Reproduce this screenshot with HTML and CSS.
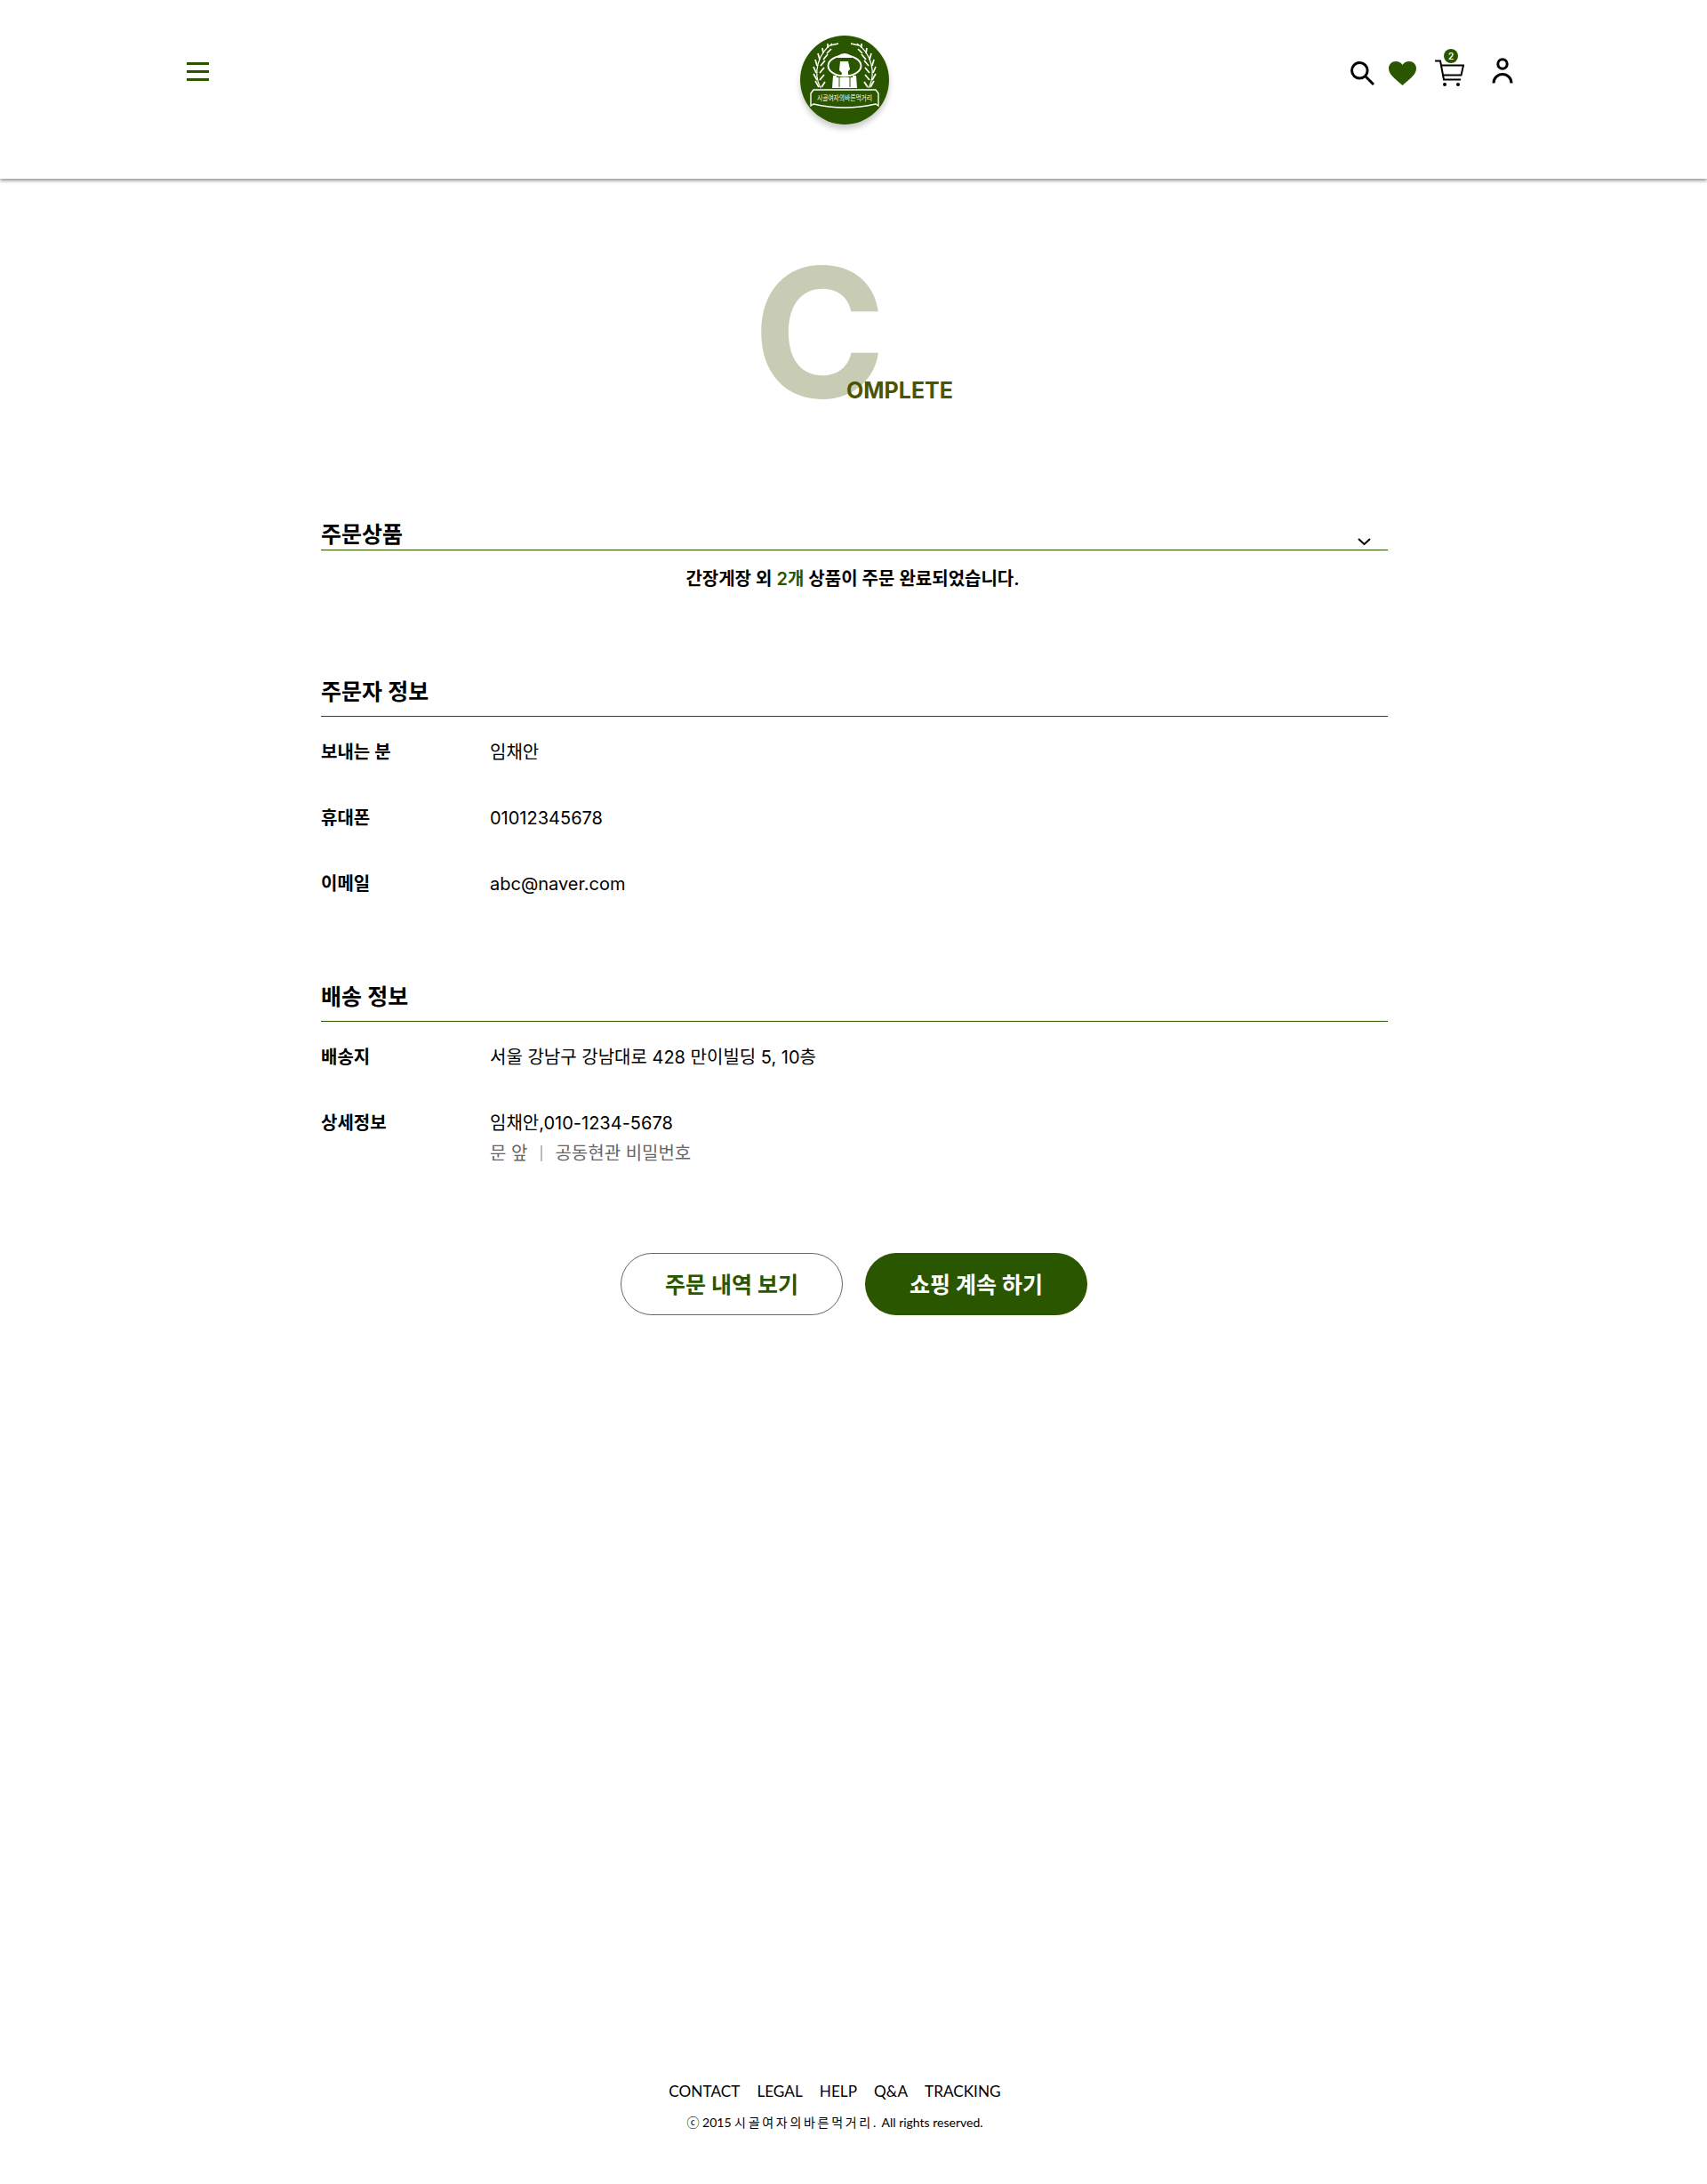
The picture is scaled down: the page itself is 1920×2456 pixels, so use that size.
FILE: index.html
```html
<!DOCTYPE html>
<html lang="ko">

<head>
    <meta charset="utf-8">
    <title>주문 완료</title>
    <meta name="viewport" content="width=device-width, initial-scale=1">
    <link rel="stylesheet" href="styles.css">
</head>

<body>
    <header class="top">
        <button class="menu" aria-label="menu"><span></span><span></span><span></span></button>
        <a class="logo" href="#">
            <svg viewBox="0 0 100 100" width="100" height="100">
                <circle cx="50" cy="50" r="50" fill="#2b5600" />
                <g fill="none" stroke="#fff">
                    <path stroke-width="1.200" d="M23 59C14 42 20 20 36 9M77 59C86 42 80 20 64 9" />
                    <path stroke-width="1.700" d="M21 58l-4-7M19 50l-4-7M18 42l-3-7M19 34l-2-7M22 27l-2-7M26 20l-1-6M31 14l0-5M24 58l4-6M22 50l5-6M22 42l5-6M23 34l5-6M26 27l5-6M30 20l5-5M34 11l9-2" />
                    <path stroke-width="1.700" d="M79 58l4-7M81 50l4-7M82 42l3-7M81 34l2-7M78 27l2-7M74 20l1-6M69 14l0-5M76 58l-4-6M78 50l-5-6M78 42l-5-6M77 34l-5-6M74 27l-5-6M70 20l-5-5M66 11l-9-2" />
                    <ellipse cx="50" cy="34" rx="18.500" ry="11.500" stroke-width="1.900" />
                </g>
                <path d="M42 23q8-6 16 0v2H42z" fill="#fff" />
                <path d="M45 29h9l2 9-2 2v6H46l1-4-3-3z" fill="#fff" />
                <path d="M37 45h4v2h18v-2h4l1 14H36z" fill="#fff" />
                <path d="M44 47v11M56 47v11" stroke="#2b5600" stroke-width="1" />
                <path d="M15 61H85l3 4v14l-3-2q-35 8-70 0l-3 2V65z" fill="#2b5600" stroke="#fff" stroke-width="1.400" />
                <text x="50" y="72.500" class="logo-text" textLength="62" lengthAdjust="spacingAndGlyphs">시골여자의바른먹거리</text>
            </svg>
        </a>
        <nav class="icons">
            <a href="#" class="ico-search">
                <svg viewBox="0 0 27 27" width="27" height="27" fill="none" stroke="#000" stroke-width="3">
                    <circle cx="10.300" cy="10.300" r="8.800" />
                    <path d="M16.500 16.500L26 26" />
                </svg>
            </a>
            <a href="#" class="ico-heart">
                <svg viewBox="0 0 31 27" width="31" height="27" fill="#2b5600">
                    <path d="M15.500 27C11 22.500 0 16 0 8C0 3.500 3.500 0 8 0C11 0 14 1.500 15.500 4C17 1.500 20 0 23 0C27.500 0 31 3.500 31 8C31 16 20 22.500 15.500 27Z" />
                </svg>
            </a>
            <a href="#" class="ico-cart">
                <svg viewBox="0 0 33 31" width="33" height="31" fill="none" stroke="#000" stroke-width="2">
                    <path d="M0 1.500h6l4 21h19" />
                    <path d="M6 6.500h26l-2.500 11H8" />
                    <circle cx="11" cy="28" r="2" fill="#000" stroke="none" />
                    <circle cx="26" cy="28" r="2" fill="#000" stroke="none" />
                </svg>
                <span class="badge">2</span>
            </a>
            <a href="#" class="ico-user">
                <svg viewBox="0 0 24 30" width="24" height="30" fill="none" stroke="#000" stroke-width="3">
                    <circle cx="12" cy="7" r="5.200" />
                    <path d="M2 28.500a10 10 0 0 1 20 0" />
                </svg>
            </a>
        </nav>
    </header>

    <main class="wrap">
        <div class="hero">
            <div class="hero-inner">
                <span class="big-c">C</span>
                <span class="omplete">OMPLETE</span>
            </div>
        </div>

        <section class="block first">
            <div class="block-title">
                <h2>주문상품</h2>
                <svg class="chev" viewBox="0 0 15 8" width="15" height="8" fill="none" stroke="#000" stroke-width="2">
                    <path d="M1 1l6.500 6L14 1" />
                </svg>
            </div>
            <p class="summary">간장게장 외 <em>2개</em> 상품이 주문 완료되었습니다.</p>
        </section>

        <section class="block">
            <div class="block-title">
                <h2>주문자 정보</h2>
            </div>
            <dl class="rows">
                <div class="row"><dt>보내는 분</dt><dd>임채안</dd></div>
                <div class="row"><dt>휴대폰</dt><dd>01012345678</dd></div>
                <div class="row"><dt>이메일</dt><dd>abc@naver.com</dd></div>
            </dl>
        </section>

        <section class="block last">
            <div class="block-title">
                <h2>배송 정보</h2>
            </div>
            <dl class="rows">
                <div class="row"><dt>배송지</dt><dd>서울 강남구 강남대로 428 만이빌딩 5, 10층</dd></div>
                <div class="row">
                    <dt>상세정보</dt>
                    <dd>
                        임채안,010-1234-5678
                        <div class="sub"><span>문 앞</span><i></i><span>공동현관 비밀번호</span></div>
                    </dd>
                </div>
            </dl>
        </section>

        <div class="buttons">
            <a href="#" class="btn line">주문 내역 보기</a>
            <a href="#" class="btn solid">쇼핑 계속 하기</a>
        </div>
    </main>

    <footer class="foot">
        <ul>
            <li>CONTACT</li>
            <li>LEGAL</li>
            <li>HELP</li>
            <li>Q&amp;A</li>
            <li>TRACKING</li>
        </ul>
        <p>ⓒ 2015 <span>시골여자의바른먹거리.</span> All rights reserved.</p>
    </footer>
</body>

</html>
```

FILE: styles.css
```css
* {
    box-sizing: border-box;
}

html,
body {
    margin: 0;
    padding: 0;
    height: 2456px;
    overflow: hidden;
}

body {
    display: flex;
    flex-direction: column;
    background: #fff;
    color: #000;
    font-family: Inter, "Noto Sans CJK KR", sans-serif;
}

a {
    color: inherit;
    text-decoration: none;
}

/* header */
.top {
    display: flex;
    align-items: flex-start;
    height: 201px;
    padding: 40px 0 0 210px;
    box-shadow: 0 2px 4px rgba(0, 0, 0, 0.45);
}

.menu {
    display: flex;
    flex-direction: column;
    gap: 6px;
    width: 25px;
    margin-top: 30px;
    padding: 0;
    border: 0;
    background: none;
}

.menu span {
    display: block;
    height: 3px;
    background: #2b5600;
}

.logo {
    display: block;
    width: 100px;
    height: 100px;
    margin-left: 665px;
    border-radius: 50%;
    box-shadow: 0 5px 6px rgba(0, 0, 0, 0.2);
}

.logo svg {
    display: block;
}

.logo-text {
    fill: #fff;
    font-size: 8.500px;
    text-anchor: middle;
    font-family: "Noto Sans CJK KR", sans-serif;
}

.icons {
    display: flex;
    align-items: flex-start;
    margin-left: 519px;
}

.icons a {
    position: relative;
    display: block;
}

.icons svg {
    display: block;
}

.ico-search {
    margin-top: 29px;
}

.ico-heart {
    margin-top: 29px;
    margin-left: 16px;
}

.ico-cart {
    margin-top: 27px;
    margin-left: 21px;
}

.ico-user {
    margin-top: 25px;
    margin-left: 31px;
}

.badge {
    position: absolute;
    top: -12px;
    left: 10px;
    width: 16px;
    height: 16px;
    border-radius: 50%;
    background: #2b5600;
    color: #fff;
    font-size: 10px;
    font-weight: 600;
    line-height: 16px;
    text-align: center;
}

/* hero */
.hero {
    height: 384px;
}

.hero-inner {
    position: relative;
    width: 215px;
    margin-left: 486px;
    padding-top: 73px;
}

.big-c {
    display: block;
    color: #c9ccb4;
    font-size: 202px;
    font-weight: 700;
    line-height: 200px;
}

.omplete {
    position: absolute;
    top: 223px;
    left: 105px;
    color: #4b5500;
    font-size: 25px;
    font-weight: 700;
    line-height: 30px;
}

/* content */
.wrap {
    width: 1200px;
    margin: 0 0 0 361px;
    flex: 1;
}

.block {
    margin-bottom: 97px;
}

.block.last {
    margin-bottom: 0;
}

.block-title {
    display: flex;
    align-items: flex-end;
    justify-content: space-between;
    padding: 0 19px 11px 0;
    border-bottom: 1px solid #2b5600;
}

.first .block-title {
    padding-bottom: 1px;
}

.block-title h2 {
    margin: 0;
    font-size: 25px;
    font-weight: 600;
    line-height: 32px;
}

.chev {
    margin-bottom: 4px;
}

.summary {
    margin: 18px 4px 0 0;
    font-size: 20px;
    font-weight: 600;
    line-height: 28px;
    text-align: center;
}

.summary em {
    color: #2b5600;
    font-style: normal;
}

.rows {
    margin: 0;
    padding-top: 26px;
}

.row {
    display: flex;
    margin-bottom: 46px;
    font-size: 20px;
    line-height: 28px;
}

.row:last-child {
    margin-bottom: 0;
}

.row dt {
    width: 190px;
    font-weight: 600;
}

.row dd {
    margin: 0;
}

.sub {
    display: flex;
    align-items: center;
    margin-top: 6px;
    color: #666;
}

.sub i {
    width: 2px;
    height: 18px;
    margin: 0 14px 0 15px;
    background: #bbb;
}

.buttons {
    display: flex;
    gap: 25px;
    margin-top: 98px;
    padding-left: 337px;
}

.btn {
    display: block;
    width: 250px;
    height: 70px;
    border-radius: 35px;
    font-size: 25px;
    font-weight: 700;
    line-height: 71px;
    text-align: center;
}

.btn.line {
    border: 1px solid #666;
    color: #2b5600;
}

.btn.solid {
    border: 1px solid #2b5600;
    background: #2b5600;
    color: #fff;
}

/* footer */
.foot {
    height: 116px;
    padding-right: 42px;
    text-align: center;
    font-family: Lato, "Noto Sans CJK KR", sans-serif;
}

.foot ul {
    display: flex;
    justify-content: center;
    gap: 19px;
    margin: 0;
    padding: 0;
    list-style: none;
    font-size: 17.200px;
    line-height: 24px;
}

.foot p {
    margin: 14px 0 0;
    font-size: 14px;
    line-height: 18px;
}

.foot p span {
    letter-spacing: 2.700px;
}
```
